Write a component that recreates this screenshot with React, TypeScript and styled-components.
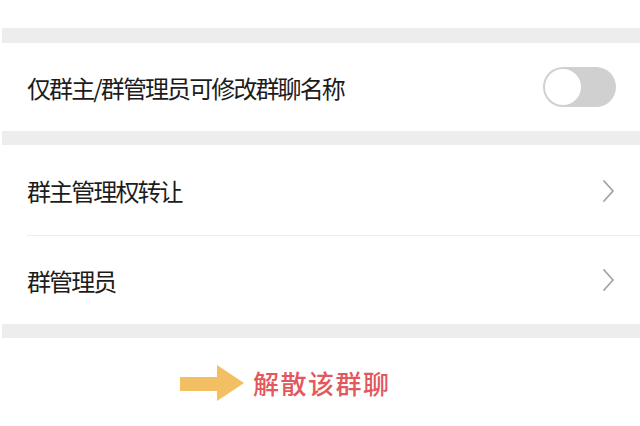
import React from 'react';
import styled, { createGlobalStyle } from 'styled-components';

const GlobalStyle = createGlobalStyle`
    html, body {
        margin: 0;
        padding: 0;
        background: #ffffff;
    }
    body {
        font-family: "Noto Sans CJK SC", "Noto Sans", sans-serif;
    }
`;

const Page = styled.div`
    width: 640px;
    height: 426px;
    padding-left: 2px;
    box-sizing: border-box;
    background: #ffffff;
    overflow: hidden;
`;

const TopSpace = styled.div`
    height: 28px;
`;

const Band = styled.div<{ h: number }>`
    height: ${(props) => props.h}px;
    background: #ededed;
`;

const Section = styled.div`
    background: #ffffff;
`;

const Row = styled.div<{ h: number; divider?: boolean }>`
    height: ${(props) => props.h}px;
    display: flex;
    align-items: center;
    justify-content: space-between;
    padding: 0 24px 0 25px;
    box-sizing: border-box;
    position: relative;
    ${(props) => props.divider && `
        &::after {
            content: '';
            position: absolute;
            left: 25px;
            right: 0;
            bottom: 0;
            height: 1px;
            background: #ececec;
        }
    `}
`;

const Label = styled.span`
    font-size: 24px;
    color: #1c1c1c;
    letter-spacing: -1.9px;
`;

const Track = styled.div<{ on: boolean }>`
    width: 73px;
    height: 40px;
    border-radius: 20px;
    background: ${(props) => (props.on ? '#07c160' : '#d0d0d0')};
    position: relative;
`;

const Knob = styled.div`
    position: absolute;
    top: 2px;
    left: 2px;
    width: 36px;
    height: 36px;
    border-radius: 50%;
    background: #ffffff;
`;

const Footer = styled.div`
    height: 89px;
    display: flex;
    align-items: center;
    padding-left: 178px;
    gap: 9px;
`;

const Danger = styled.span`
    font-size: 26px;
    font-weight: 500;
    color: #e2585c;
    letter-spacing: 1.5px;
`;

function Chevron() {
    return (
        <svg width="14" height="24" viewBox="0 0 14 24">
            <path d="M2 2 L11 12 L2 22" fill="none" stroke="#a3a3a3" strokeWidth="1.8" strokeLinecap="round" strokeLinejoin="round" />
        </svg>
    );
}

function Arrow() {
    return (
        <svg width="64" height="36" viewBox="0 0 64 36">
            <path d="M0 12 H37 V0 L64 18 L37 36 V26 H0 Z" fill="#f2c062" />
        </svg>
    );
}

function Toggle({ on }: { on: boolean }) {
    return (
        <Track on={on}>
            <Knob />
        </Track>
    );
}

export default function App() {
    return (
        <Page>
            <GlobalStyle />
            <TopSpace />
            <Band h={15} />
            <Section>
                <Row h={88}>
                    <Label>仅群主/群管理员可修改群聊名称</Label>
                    <Toggle on={false} />
                </Row>
            </Section>
            <Band h={14} />
            <Section>
                <Row h={91} divider>
                    <Label>群主管理权转让</Label>
                    <Chevron />
                </Row>
                <Row h={88}>
                    <Label>群管理员</Label>
                    <Chevron />
                </Row>
            </Section>
            <Band h={14} />
            <Footer>
                <Arrow />
                <Danger>解散该群聊</Danger>
            </Footer>
        </Page>
    );
}
